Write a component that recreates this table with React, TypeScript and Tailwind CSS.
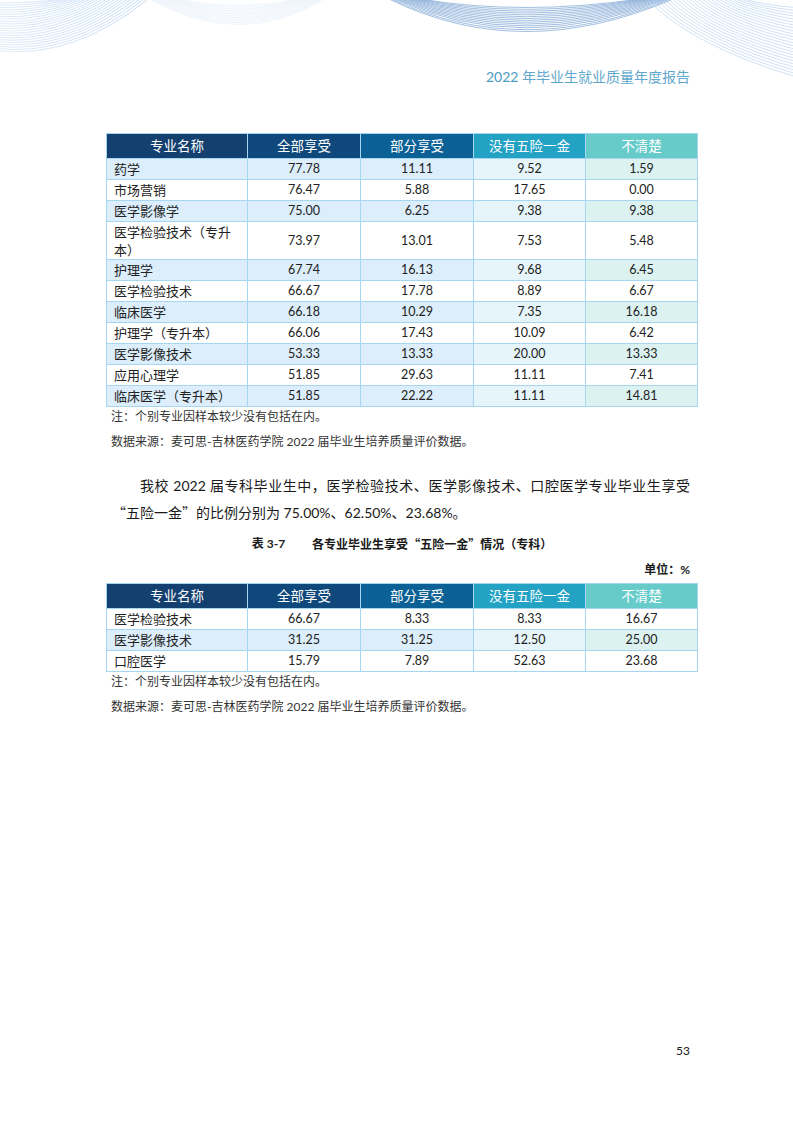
import React from "react";

type Row = { name: string; values: string[]; tall?: boolean };

const tableOne: Row[] = [
  { name: "药学", values: ["77.78", "11.11", "9.52", "1.59"] },
  { name: "市场营销", values: ["76.47", "5.88", "17.65", "0.00"] },
  { name: "医学影像学", values: ["75.00", "6.25", "9.38", "9.38"] },
  { name: "医学检验技术（专升本）", values: ["73.97", "13.01", "7.53", "5.48"], tall: true },
  { name: "护理学", values: ["67.74", "16.13", "9.68", "6.45"] },
  { name: "医学检验技术", values: ["66.67", "17.78", "8.89", "6.67"] },
  { name: "临床医学", values: ["66.18", "10.29", "7.35", "16.18"] },
  { name: "护理学（专升本）", values: ["66.06", "17.43", "10.09", "6.42"] },
  { name: "医学影像技术", values: ["53.33", "13.33", "20.00", "13.33"] },
  { name: "应用心理学", values: ["51.85", "29.63", "11.11", "7.41"] },
  { name: "临床医学（专升本）", values: ["51.85", "22.22", "11.11", "14.81"] },
];

const tableTwo: Row[] = [
  { name: "医学检验技术", values: ["66.67", "8.33", "8.33", "16.67"] },
  { name: "医学影像技术", values: ["31.25", "31.25", "12.50", "25.00"] },
  { name: "口腔医学", values: ["15.79", "7.89", "52.63", "23.68"] },
];

const headers = [
  { label: "专业名称", bg: "bg-[#13406f]" },
  { label: "全部享受", bg: "bg-[#0f497b]" },
  { label: "部分享受", bg: "bg-[#0b6195]" },
  { label: "没有五险一金", bg: "bg-[#23a2c4]" },
  { label: "不清楚", bg: "bg-[#67cbca]" },
];

// tint per column for striped rows
const tints = ["bg-[#dcedfb]", "bg-[#dcedfb]", "bg-[#dcedfb]", "bg-[#e6f5fa]", "bg-[#dbf2f1]"];

const steps = (n: number) => Array.from({ length: n }, (_, i) => i / (n - 1));

function TopWaves() {
  return (
    <svg
      className="pointer-events-none absolute left-0 top-0"
      width="793"
      height="120"
      viewBox="0 0 793 120"
      fill="none"
    >
      <defs>
        <linearGradient id="leftFan" x1="0" y1="0" x2="150" y2="0" gradientUnits="userSpaceOnUse">
          <stop offset="0" stopColor="#cfe2f6" />
          <stop offset="1" stopColor="#a2c6ec" />
        </linearGradient>
      </defs>
      {steps(22).map((t) => {
        const yb = 3 + 50 * t;
        const xe = 62 + 86 * t;
        return (
          <path
            key={`l${t}`}
            d={`M -4 ${yb * 0.96} Q ${xe * 0.5} ${yb * 1.12} ${xe} -1`}
            stroke="url(#leftFan)"
            strokeWidth="0.65"
          />
        );
      })}
      {steps(12).map((t) => {
        const b = 6 + 19 * t;
        return (
          <path
            key={`f${t}`}
            d={`M ${175 - 25 * t} -1 Q 240 ${2 * b} ${300 + 24 * t} -1`}
            stroke="#e3edf8"
            strokeWidth="0.6"
          />
        );
      })}
      {steps(14).map((t) => {
        const b = 8 + 24 * t;
        return (
          <path
            key={`d${t}`}
            d={`M ${420 - 31 * t} -1 Q 522 ${2 * b} ${640 + 33 * t} -1`}
            stroke="#7aa3d3"
            strokeWidth="0.7"
          />
        );
      })}
      {steps(24).map((t) => {
        const x0 = 745 - 98 * t;
        const ye = 8 + 70 * t;
        return (
          <path
            key={`r${t}`}
            d={`M ${x0} -1 Q ${x0 + (800 - x0) * 0.3} ${ye * 0.6} 800 ${ye}`}
            stroke="#b0cfee"
            strokeWidth="0.6"
          />
        );
      })}
    </svg>
  );
}

function DataTable({ rows, tinted }: { rows: Row[]; tinted: (i: number) => boolean }) {
  return (
    <table className="w-[591px] table-fixed border-collapse">
      <colgroup>
        <col className="w-[141px]" />
        <col className="w-[113px]" />
        <col className="w-[113px]" />
        <col className="w-[112px]" />
        <col className="w-[112px]" />
      </colgroup>
      <thead>
        <tr className="h-[25px]">
          {headers.map((h) => (
            <th
              key={h.label}
              className={`${h.bg} border border-[#a6d6f0] p-0 text-center text-[13.5px] font-normal leading-[24px] text-white`}
            >
              {h.label}
            </th>
          ))}
        </tr>
      </thead>
      <tbody>
        {rows.map((r, i) => {
          const on = tinted(i);
          return (
            <tr key={r.name} className={r.tall ? "h-[38px]" : "h-[21px]"}>
              <td
                className={`${on ? tints[0] : "bg-white"} border border-[#a6d6f0] px-[7px] py-0 text-left text-[13px] leading-[18px] text-[#222]`}
              >
                {r.name}
              </td>
              {r.values.map((v, j) => (
                <td
                  key={j}
                  className={`${on ? tints[j + 1] : "bg-white"} border border-[#a6d6f0] p-0 text-center text-[12.5px] leading-[20px] text-[#222]`}
                >
                  {v}
                </td>
              ))}
            </tr>
          );
        })}
      </tbody>
    </table>
  );
}

function Notes() {
  return (
    <div className="pl-[5px] text-[12px] text-[#333]">
      <p className="leading-[20px]">注：个别专业因样本较少没有包括在内。</p>
      <p className="mt-[5px] leading-[20px]">
        数据来源：麦可思-吉林医药学院 2022 届毕业生培养质量评价数据。
      </p>
    </div>
  );
}

const cjk = "font-['Noto_Sans_CJK_SC',sans-serif]";

export default function App() {
  return (
    <div className="relative flex h-[1122px] w-[793px] flex-col overflow-hidden bg-white font-['Lato','Noto_Sans_CJK_SC',sans-serif]">
      <TopWaves />

      <div className="relative flex flex-1 flex-col pl-[106px] pr-[95px]">
        {/* running header */}
        <div className="pt-[66px] pr-[8px] text-right text-[14px] leading-[22px] text-[#5fa8cb]">
          <span className="text-[#4a9bc3]">2022</span> 年毕业生就业质量年度报告
        </div>

        <div className="mt-[45px]">
          <DataTable rows={tableOne} tinted={(i) => i % 2 === 0} />
        </div>
        <Notes />

        {/* body paragraph */}
        <div className="mt-[21px] pl-[6px] pr-[8px] text-[14px] leading-[26px] text-[#1a1a1a]">
          <p className="indent-[28px] text-justify [text-align-last:justify]">
            我校 2022 届专科毕业生中，医学检验技术、医学影像技术、口腔医学专业毕业生享受
          </p>
          <p>
            <span className={cjk}>“</span>五险一金<span className={cjk}>”</span>的比例分别为 75.00%、62.50%、23.68%。
          </p>
        </div>

        <div className="mt-[8px] flex justify-center gap-[27px] text-[12px] font-bold leading-[20px] text-[#1a1a1a]">
          <span>表 3-7</span>
          <span>
            各专业毕业生享受<span className={cjk}>“</span>五险一金<span className={cjk}>”</span>情况（专科）
          </span>
        </div>
        <div className="mt-[5px] pr-[8px] text-right text-[12px] font-bold leading-[20px] text-[#1a1a1a]">
          单位：%
        </div>

        <div className="mt-[3px]">
          <DataTable rows={tableTwo} tinted={(i) => i === 1} />
        </div>
        <Notes />

        <div className="mt-auto pb-[61px] pr-[8px] text-right text-[12px] leading-[20px] text-[#222]">
          53
        </div>
      </div>
    </div>
  );
}
